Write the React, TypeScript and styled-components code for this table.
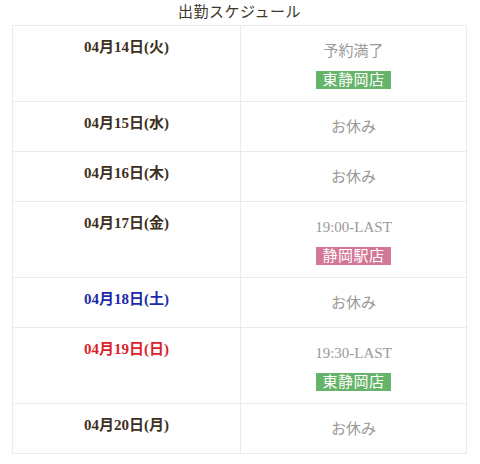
import { FC } from "react";
import { styled, createGlobalStyle } from "styled-components";

type Shop = "east" | "station";

type Day = {
  date: string;
  tone?: "sat" | "sun";
  time?: string;
  shop?: Shop;
};

const days: Day[] = [
  { date: "04月14日(火)", time: "予約満了", shop: "east" },
  { date: "04月15日(水)" },
  { date: "04月16日(木)" },
  { date: "04月17日(金)", time: "19:00-LAST", shop: "station" },
  { date: "04月18日(土)", tone: "sat" },
  { date: "04月19日(日)", tone: "sun", time: "19:30-LAST", shop: "east" },
  { date: "04月20日(月)" },
];

const shopName: Record<Shop, string> = {
  east: "東静岡店",
  station: "静岡駅店",
};

const App: FC = () => {
  return (
    <>
      <GlobalStyle />
      <Wrapper>
        <Title>出勤スケジュール</Title>
        <Schedule>
          <tbody>
            {days.map((d) => (
              <tr key={d.date}>
                <DateCell $tone={d.tone}>{d.date}</DateCell>
                <InfoCell>
                  <InfoText>{d.time ?? "お休み"}</InfoText>
                  {d.shop && <Badge $shop={d.shop}>{shopName[d.shop]}</Badge>}
                </InfoCell>
              </tr>
            ))}
          </tbody>
        </Schedule>
      </Wrapper>
    </>
  );
};

export default App;

const GlobalStyle = createGlobalStyle`
  body {
    margin: 0;
    background: #fff;
    font-family: "Liberation Serif", "Noto Sans CJK JP", serif;
  }
`;

const Wrapper = styled.div`
  width: 480px;
  padding: 0 13px 0 12px;
  box-sizing: border-box;
`;

const Title = styled.h2`
  margin: 0;
  height: 25px;
  line-height: 24px;
  text-align: center;
  font-size: 15px;
  font-weight: normal;
  color: #3f372c;
  letter-spacing: 0.5px;
`;

const Schedule = styled.table`
  width: 100%;
  border-collapse: collapse;
  table-layout: fixed;

  td {
    border: 1px solid #ebebeb;
  }
`;

const DateCell = styled.td<{ $tone?: "sat" | "sun" }>`
  width: 50%;
  vertical-align: top;
  text-align: center;
  padding: 9px 0 0;
  line-height: 24px;
  font-size: 15px;
  font-weight: bold;
  color: ${(p) =>
    p.$tone === "sat" ? "#1d2aa8" : p.$tone === "sun" ? "#d8232a" : "#3d3020"};
`;

const InfoCell = styled.td`
  text-align: center;
  vertical-align: middle;
  padding: 13px 0 12px;
`;

const InfoText = styled.div`
  line-height: 24px;
  font-size: 15px;
  color: #9a9a9a;
`;

const Badge = styled.div<{ $shop: Shop }>`
  display: inline-block;
  margin-top: 8px;
  padding: 0 6px;
  height: 18px;
  line-height: 18px;
  font-size: 15px;
  color: #fff;
  letter-spacing: 0.5px;
  background: ${(p) => (p.$shop === "east" ? "#66b36a" : "#d27896")};
  vertical-align: top;
`;
